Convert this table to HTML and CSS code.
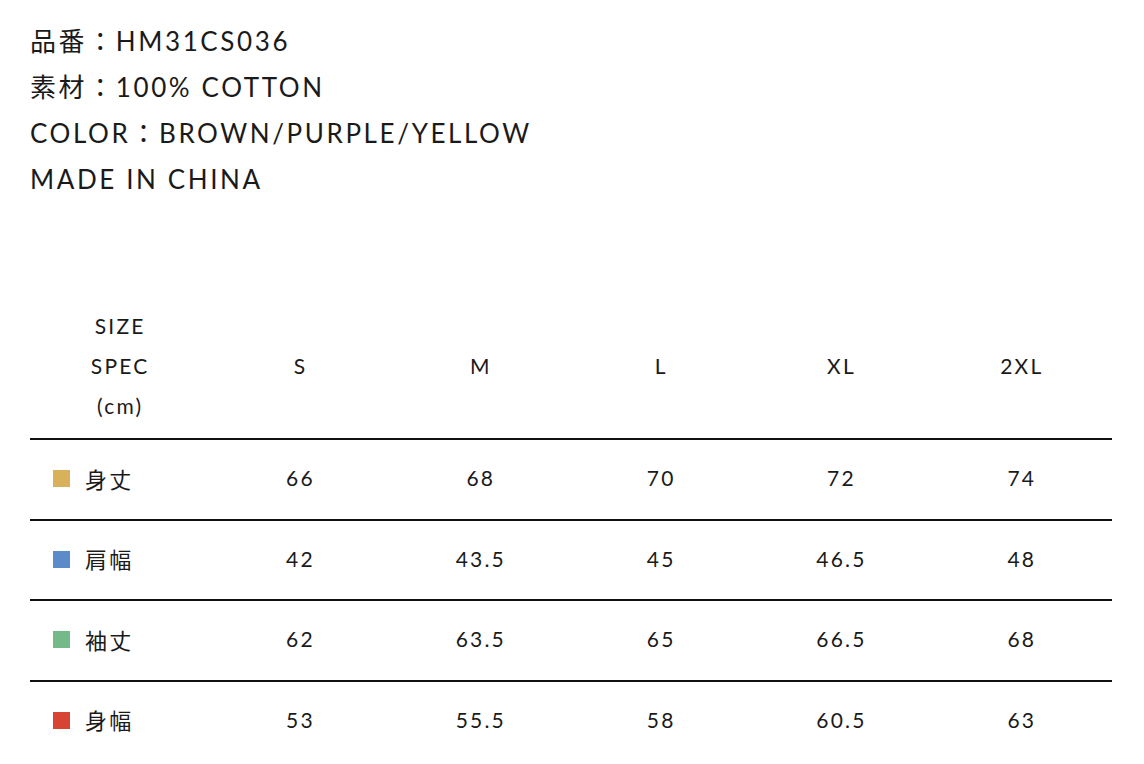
FILE: index.html
```html
<!DOCTYPE html>
<html lang="ja">
<head>
<meta charset="utf-8">
<link rel="stylesheet" href="styles.css">
</head>
<body>
<div class="page">
  <div class="info">
    <p>品番：HM31CS036</p>
    <p>素材：100% COTTON</p>
    <p>COLOR：BROWN/PURPLE/YELLOW</p>
    <p>MADE IN CHINA</p>
  </div>
  <div class="table">
    <div class="row head">
      <div class="cell">SIZE<br>SPEC<br>(cm)</div>
      <div class="cell">S</div>
      <div class="cell">M</div>
      <div class="cell">L</div>
      <div class="cell">XL</div>
      <div class="cell">2XL</div>
    </div>
    <div class="row">
      <div class="cell label"><span class="sq yellow"></span>身丈</div>
      <div class="cell">66</div><div class="cell">68</div><div class="cell">70</div><div class="cell">72</div><div class="cell">74</div>
    </div>
    <div class="row">
      <div class="cell label"><span class="sq blue"></span>肩幅</div>
      <div class="cell">42</div><div class="cell">43.5</div><div class="cell">45</div><div class="cell">46.5</div><div class="cell">48</div>
    </div>
    <div class="row">
      <div class="cell label"><span class="sq green"></span>袖丈</div>
      <div class="cell">62</div><div class="cell">63.5</div><div class="cell">65</div><div class="cell">66.5</div><div class="cell">68</div>
    </div>
    <div class="row">
      <div class="cell label"><span class="sq red"></span>身幅</div>
      <div class="cell">53</div><div class="cell">55.5</div><div class="cell">58</div><div class="cell">60.5</div><div class="cell">63</div>
    </div>
  </div>
</div>
</body>
</html>
```
FILE: styles.css
```css
html, body {
  margin: 0;
  padding: 0;
  background: #fff;
}
body {
  font-family: "Lato", "Noto Sans CJK JP", sans-serif;
  color: #1a1a1a;
}
.page {
  padding: 18px 32px 0 30px;
}
.info p {
  margin: 0;
  font-size: 26px;
  line-height: 46px;
  letter-spacing: 2.6px;
}
.table {
  margin-top: 92px;
}
.row {
  box-sizing: border-box;
  display: grid;
  grid-template-columns: repeat(6, 1fr);
  align-items: center;
  height: 80.5px;
  padding-bottom: 3px;
  font-size: 21px;
  letter-spacing: 2.2px;
}
.row + .row {
  border-top: 2px solid #111;
}
.row.head {
  height: 144px;
  padding-bottom: 0;
  line-height: 40px;
}
.cell {
  text-align: center;
}
.cell.label {
  text-align: left;
  display: flex;
  align-items: center;
  padding-left: 23px;
  gap: 15px;
  font-size: 22px;
}
.sq {
  display: inline-block;
  width: 17px;
  height: 17px;
  margin-top: 2px;
}
.yellow { background: #d9b15a; }
.blue { background: #5b8bc8; }
.green { background: #74b98a; }
.red { background: #d84433; }
```
